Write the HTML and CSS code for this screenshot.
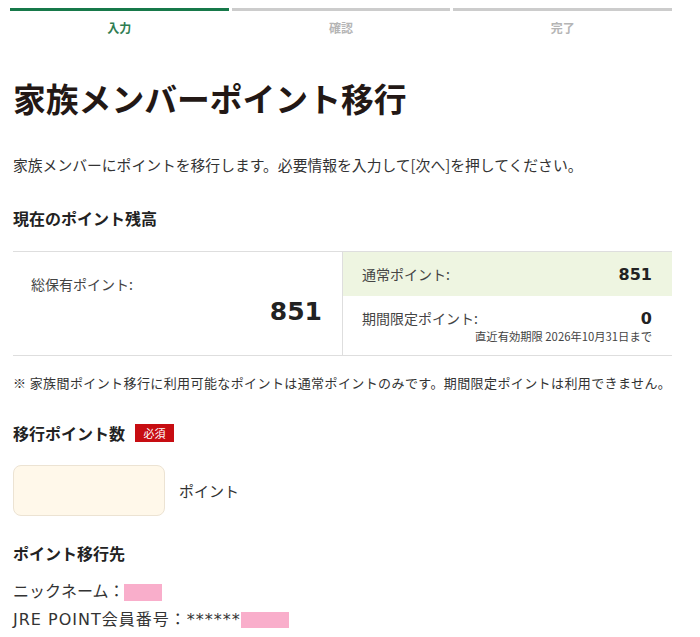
FILE: index.html
```html
<!DOCTYPE html>
<html lang="ja">
<head>
<meta charset="utf-8">
<title>家族メンバーポイント移行</title>
<link rel="stylesheet" href="styles.css">
</head>
<body>
<div class="page">
  <div class="steps">
    <div class="step active"><div class="bar"></div><div class="label">入力</div></div>
    <div class="step"><div class="bar"></div><div class="label">確認</div></div>
    <div class="step"><div class="bar"></div><div class="label">完了</div></div>
  </div>

  <h1 class="title">家族メンバーポイント移行</h1>
  <p class="desc">家族メンバーにポイントを移行します。必要情報を入力して[次へ]を押してください。</p>

  <h2 class="heading h-balance">現在のポイント残高</h2>
  <div class="balance">
    <div class="total">
      <div class="total-label">総保有ポイント:</div>
      <div class="total-value">851</div>
    </div>
    <div class="breakdown">
      <div class="row normal">
        <span class="row-label">通常ポイント:</span>
        <span class="row-value">851</span>
      </div>
      <div class="row limited">
        <div class="row-line">
          <span class="row-label">期間限定ポイント:</span>
          <span class="row-value">0</span>
        </div>
        <div class="expiry">直近有効期限 2026年10月31日まで</div>
      </div>
    </div>
  </div>
  <p class="note">※ 家族間ポイント移行に利用可能なポイントは通常ポイントのみです。期間限定ポイントは利用できません。</p>

  <h2 class="heading h-amount">移行ポイント数<span class="badge">必須</span></h2>
  <div class="amount">
    <input class="amount-input" type="text" aria-label="移行ポイント数">
    <span class="unit">ポイント</span>
  </div>

  <h2 class="heading h-dest">ポイント移行先</h2>
  <div class="dest">
    <div class="dest-line">ニックネーム：<span class="mask mask-nick"></span></div>
    <div class="dest-line member">JRE POINT会員番号：<span class="stars">******</span><span class="mask mask-id"></span></div>
  </div>
</div>
</body>
</html>
```
FILE: styles.css
```css
* { box-sizing: border-box; }
html, body { margin: 0; padding: 0; background: #fff; }
body {
  font-family: "Noto Sans CJK JP", "Noto Sans", sans-serif;
  color: #333;
}
.page { padding: 8px 28px 0 13px; }

.steps { display: flex; gap: 3px; margin-left: -3px; }
.step { flex: 1; }
.step .bar { height: 3px; background: #cccccc; }
.step.active .bar { background: #17794a; }
.step .label {
  margin-top: 7px;
  line-height: 20px;
  font-size: 12px;
  font-weight: 700;
  text-align: center;
  color: #b5b5b5;
}
.step.active .label { color: #2f7d51; }

.title {
  margin: 40px 0 0;
  font-size: 32.8px;
  line-height: 40px;
  font-weight: 700;
  color: #231815;
}
.desc {
  margin: 37px 0 0;
  font-size: 14.8px;
  line-height: 20px;
  color: #333;
}
.heading {
  margin: 0;
  font-size: 16px;
  line-height: 24px;
  font-weight: 700;
  color: #222;
  display: flex;
  align-items: center;
}
.h-balance { margin-top: 31px; }

.balance {
  margin-top: 21px;
  display: flex;
  border-top: 1px solid #dedede;
  border-bottom: 1px solid #dedede;
  height: 105px;
}
.total {
  flex: 1;
  padding: 20px 20px 0 18px;
}
.total-label { font-size: 14px; line-height: 24px; color: #444; }
.total-value {
  text-align: right;
  font-size: 25px;
  line-height: 34px;
  font-weight: 700;
  color: #222;
  margin-top: -1px;
  font-family: "DejaVu Sans", "Noto Sans", sans-serif;
}
.breakdown {
  width: 330px;
  border-left: 1px solid #dedede;
  display: flex;
  flex-direction: column;
}
.row { padding: 0 20px 0 19px; }
.normal {
  height: 44px;
  background: #eef5e1;
  display: flex;
  align-items: center;
  justify-content: space-between;
}
.limited { padding-top: 10px; }
.row-line { display: flex; justify-content: space-between; align-items: center; }
.row-label { font-size: 14px; line-height: 24px; color: #444; }
.row-value {
  font-size: 16px;
  font-weight: 700;
  color: #222;
  font-family: "DejaVu Sans", "Noto Sans", sans-serif;
}
.expiry {
  text-align: right;
  font-size: 11.3px;
  line-height: 16px;
  color: #444;
  margin-top: -2px;
}

.note {
  margin: 18px 0 0;
  font-size: 13px;
  letter-spacing: 0.4px;
  line-height: 18px;
  white-space: nowrap;
  color: #333;
}
.h-amount { margin-top: 29px; }
.badge {
  margin-left: 10px;
  display: inline-flex;
  align-items: center;
  justify-content: center;
  width: 39px;
  height: 18px;
  background: #c70d12;
  color: #fff;
  font-size: 11px;
  font-weight: 400;
}

.amount {
  margin-top: 20px;
  display: flex;
  align-items: center;
  gap: 14px;
}
.amount-input {
  width: 152px;
  height: 51px;
  background: #fff8ea;
  border: 1px solid #ece3d3;
  border-radius: 8px;
  outline: none;
}
.unit { font-size: 15px; color: #333; }

.h-dest { margin-top: 25px; }
.dest { margin-top: 13px; }
.dest-line {
  font-size: 16px;
  line-height: 28px;
  color: #333;
  display: flex;
  align-items: center;
  font-family: "DejaVu Sans", "Noto Sans CJK JP", sans-serif;
}
.member { letter-spacing: 1px; }
.stars { letter-spacing: 1px; }
.mask { display: inline-block; background: #f9aecb; }
.mask-nick { width: 38px; height: 17px; margin-left: -1px; }
.mask-id { width: 48px; height: 16px; }
```
